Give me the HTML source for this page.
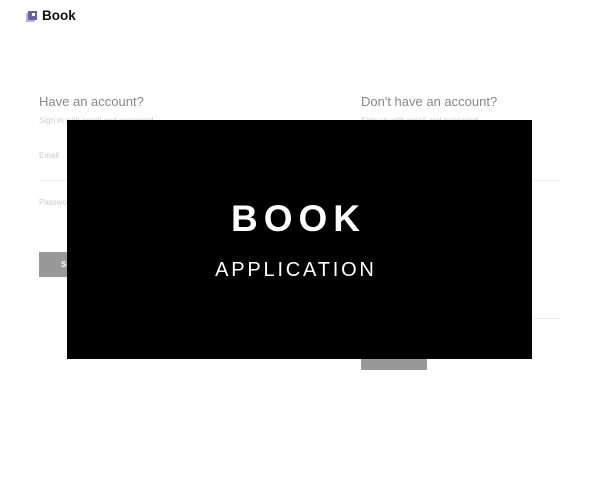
<!DOCTYPE html>
<html><head><style>
body{margin:0;width:599px;height:481px;background:#fff;font-family:"Liberation Sans",sans-serif;position:relative;overflow:hidden}
.a{position:absolute;white-space:nowrap}
</style></head><body>
<svg class="a" style="left:26px;top:11px" width="11" height="11" viewBox="0 0 11 11"><rect x="0" y="2" width="9" height="9" fill="#b9b3d6"/><rect x="2" y="0" width="9" height="9" fill="#6a5fa6"/><rect x="6" y="2" width="3" height="3" fill="#fff"/></svg>
<div class="a" style="left:42px;top:8px;font-size:13.5px;font-weight:bold;color:#111">Book</div>

<div class="a" style="left:39px;top:94px;font-size:13px;color:#888">Have an account?</div>
<div class="a" style="left:39px;top:116px;font-size:8px;color:#ccc">Sign in with email and password</div>
<div class="a" style="left:39px;top:151px;font-size:8px;color:#ccc">Email</div>
<div class="a" style="left:39px;top:180px;width:280px;height:1px;background:#eee"></div>
<div class="a" style="left:39px;top:198px;font-size:8px;color:#ccc">Password</div>
<div class="a" style="left:39px;top:252px;width:90px;height:25px;background:#999"></div>
<div class="a" style="left:61px;top:260px;font-size:8px;font-weight:bold;color:#fff">SI</div>

<div class="a" style="left:361px;top:94px;font-size:13px;color:#888">Don't have an account?</div>
<div class="a" style="left:361px;top:116px;font-size:8px;color:#ccc">Sign up with email and password</div>
<div class="a" style="left:361px;top:180px;width:200px;height:1px;background:#eee"></div>
<div class="a" style="left:361px;top:318px;width:200px;height:1px;background:#eee"></div>
<div class="a" style="left:361px;top:350px;width:66px;height:20px;background:#999"></div>

<div class="a" style="left:67px;top:120px;width:465px;height:239px;background:#000"></div>
<div class="a" style="left:63px;top:198px;width:465px;text-align:center;font-size:37px;font-weight:bold;color:#fff;letter-spacing:6px;text-indent:6px">BOOK</div>
<div class="a" style="left:62px;top:259px;width:465px;text-align:center;font-size:20px;color:#fff;letter-spacing:2.8px;text-indent:2.8px">APPLICATION</div>
</body></html>
